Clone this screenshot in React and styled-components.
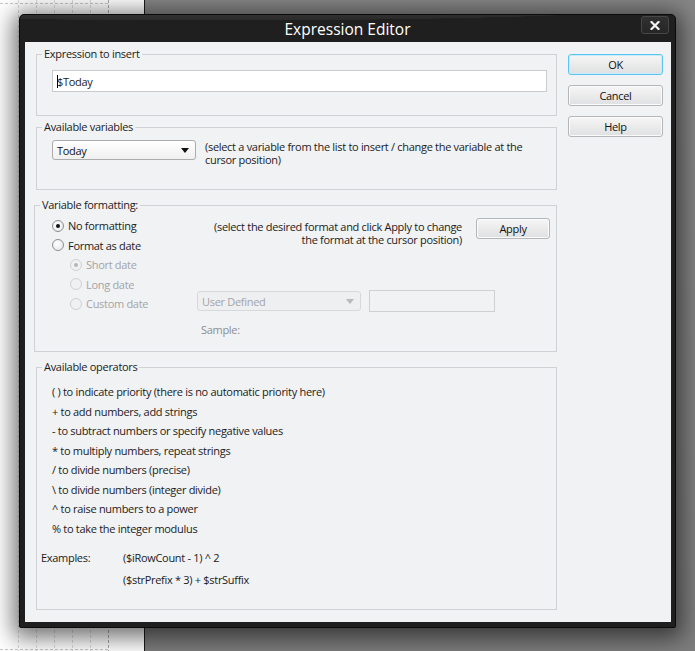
import React from 'react';
import styled, { createGlobalStyle } from 'styled-components';

const GlobalStyle = createGlobalStyle`
  html, body {
    margin: 0;
    padding: 0;
    background: #808080;
    overflow: hidden;
  }
  * { box-sizing: border-box; }
`;

const UI_FONT = `"Open Sans", "Noto Sans", sans-serif`;

const Desktop = styled.div`
  position: relative;
  width: 695px;
  height: 651px;
  display: flex;
  font-family: ${UI_FONT};
  font-size: 11px;
  letter-spacing: -0.3px;
  color: #1b1b1b;
`;

const PageSheet = styled.div`
  width: 145px;
  background: #ffffff;
  border-right: 1px solid #1a1a1a;
  position: relative;
`;

const GrayArea = styled.div`
  flex: 1;
  background: linear-gradient(#868686, #7d7d7d);
`;

const Window = styled.div`
  position: absolute;
  left: 19px;
  top: 14px;
  width: 657px;
  height: 614px;
  background: #1f1f1f;
  border: 1px solid #0a0a0a;
  border-radius: 5px 5px 2px 2px;
  box-shadow: 0 4px 22px 6px rgba(0, 0, 0, 0.55);
  display: flex;
  flex-direction: column;
`;

const TitleBar = styled.div`
  height: 27px;
  position: relative;
  display: flex;
  align-items: center;
  justify-content: center;
  color: #ffffff;
  font-size: 15.5px;
  letter-spacing: 0;
  background: radial-gradient(ellipse 120% 90% at 30% -30%, #3e3e3e 0%, #2a2a2a 55%, #1f1f1f 56%);
  border-radius: 5px 5px 0 0;
`;

const CloseButton = styled.div`
  position: absolute;
  right: 6px;
  top: 1px;
  width: 28px;
  height: 18px;
  border: 1px solid #474747;
  border-radius: 3px;
  background: linear-gradient(#303030, #262626);
  display: flex;
  align-items: center;
  justify-content: center;
`;

const Body = styled.div`
  flex: 1;
  margin: 0 4px 5px 5px;
  background: #f1f2f4;
  display: flex;
  gap: 11px;
  padding: 5px 0 0 11px;
`;

const MainColumn = styled.div`
  width: 521px;
  display: flex;
  flex-direction: column;
`;

const Group = styled.fieldset`
  margin: ${p => p.$top || 0}px 0 0 ${p => p.$shift || 0}px;
  padding: 0;
  border: 1px solid #cfd1d4;
  height: ${p => p.$h}px;
  position: relative;
  min-width: 0;
`;

const Legend = styled.legend`
  margin-left: 5px;
  padding: 0 2px;
  line-height: 14px;
  color: #1b1b1b;
`;

const TextBox = styled.div`
  margin: 9px 9px 0 15px;
  height: 22px;
  background: #ffffff;
  border: 1px solid #c9cacc;
  display: flex;
  align-items: center;
  padding-left: 4px;
`;

const Caret = styled.span`
  display: inline-block;
  width: 1px;
  height: 13px;
  background: #000;
  margin-right: -1px;
`;

const VarRow = styled.div`
  display: flex;
  align-items: flex-start;
  gap: 9px;
  margin: 6px 0 0 15px;
`;

const Combo = styled.div`
  width: ${p => p.$w}px;
  height: 20px;
  border: 1px solid ${p => (p.$disabled ? '#d7d8da' : '#acacac')};
  border-radius: 3px;
  background: ${p => (p.$disabled ? '#eeeff1' : 'linear-gradient(#ffffff, #f0f0f0)')};
  color: ${p => (p.$disabled ? '#a3a4a6' : '#111')};
  display: flex;
  align-items: center;
  justify-content: space-between;
  padding: 0 6px 0 4px;
  flex-shrink: 0;
`;

const HintText = styled.div`
  line-height: 13px;
  width: ${p => p.$w}px;
  text-align: ${p => p.$align || 'left'};
  margin-top: ${p => p.$mt || 0}px;
`;

const FormatGrid = styled.div`
  display: grid;
  grid-template-columns: 145px 1fr;
  margin: 4px 0 0 17px;
`;

const RadioList = styled.div`
  display: flex;
  flex-direction: column;
  padding-left: ${p => p.$indent || 0}px;
`;

const RadioRow = styled.div`
  display: flex;
  align-items: center;
  gap: 4px;
  height: 19.5px;
  color: ${p => (p.$disabled ? '#a3a4a6' : '#1b1b1b')};
  white-space: nowrap;
`;

const RadioDot = styled.span`
  width: 12px;
  height: 12px;
  border-radius: 50%;
  border: 1px solid ${p => (p.$disabled ? '#cfd0d2' : '#8c8e92')};
  background: ${p => (p.$disabled ? '#f0f1f3' : 'radial-gradient(circle at 40% 35%, #ffffff, #e4e5e8)')};
  display: flex;
  align-items: center;
  justify-content: center;
  flex-shrink: 0;

  &::after {
    content: '';
    width: 4px;
    height: 4px;
    border-radius: 50%;
    background: ${p => (p.$disabled ? '#b5b6b8' : '#111')};
    display: ${p => (p.$checked ? 'block' : 'none')};
  }
`;

const FormatRight = styled.div`
  display: flex;
  flex-direction: column;
`;

const HintBlock = styled.div`
  display: flex;
  gap: 14px;
  align-items: flex-start;
  height: 45px;
`;

const DateFields = styled.div`
  display: flex;
  gap: 8px;
  align-items: center;
  margin-top: 29px;
`;

const PlainBox = styled.div`
  width: 126px;
  height: 22px;
  border: 1px solid #cfd0d2;
  background: #f1f2f4;
`;

const SampleLabel = styled.div`
  color: #8d8e90;
  margin: 10px 0 0 4px;
`;

const WinButton = styled.div`
  width: ${p => p.$w || 95}px;
  height: 21px;
  margin-top: ${p => p.$mt || 0}px;
  border: 1px solid ${p => (p.$focus ? '#5cc4f2' : '#b4b6b9')};
  border-radius: 3px;
  background: linear-gradient(#f6f6f6 0%, #ebebeb 50%, #dfe0e2 100%);
  display: flex;
  align-items: center;
  justify-content: center;
  color: #111;
  flex-shrink: 0;
  box-shadow: ${p => (p.$focus ? 'inset 0 0 0 1px #c8ecfc' : 'inset 0 0 0 1px #fbfbfb')};
`;

const ButtonColumn = styled.div`
  display: flex;
  flex-direction: column;
  gap: 10px;
  padding-top: 7px;
`;

const OperatorList = styled.div`
  display: flex;
  flex-direction: column;
  margin: 8px 0 0 15px;
`;

const OperatorLine = styled.div`
  height: 19.5px;
  line-height: 19.5px;
`;

const ExamplesGrid = styled.div`
  display: grid;
  grid-template-columns: 82px 1fr;
  margin: 9px 0 0 4px;

  & > div {
    height: 22px;
    line-height: 22px;
  }
`;

const Arrow = ({ color = '#111' }) => (
  <svg width="8" height="5" viewBox="0 0 8 5">
    <path d="M0 0 H8 L4 5 Z" fill={color} />
  </svg>
);

const SheetGrid = () => (
  <svg width="145" height="651" style={{ position: 'absolute', left: 0, top: 0 }}>
    {[18, 36, 54, 72, 90].map(x => (
      <line key={x} x1={x + 0.5} y1="0" x2={x + 0.5} y2="651" stroke="#dcdcdc" strokeDasharray="3 2" />
    ))}
    <line x1="108.5" y1="0" x2="108.5" y2="651" stroke="#a9a9a9" strokeDasharray="3 2" />
    <line x1="0" y1="3.5" x2="109" y2="3.5" stroke="#c8c8c8" strokeDasharray="3 2" />
    <line x1="0" y1="649.5" x2="109" y2="649.5" stroke="#c8c8c8" strokeDasharray="3 2" />
  </svg>
);

const operators = [
  '( ) to indicate priority (there is no automatic priority here)',
  '+ to add numbers, add strings',
  '- to subtract numbers or specify negative values',
  '* to multiply numbers, repeat strings',
  '/ to divide numbers (precise)',
  '\\ to divide numbers (integer divide)',
  '^ to raise numbers to a power',
  '% to take the integer modulus',
];

export default function App() {
  return (
    <>
      <GlobalStyle />
      <Desktop>
        <PageSheet>
          <SheetGrid />
        </PageSheet>
        <GrayArea />

        <Window>
          <TitleBar>
            Expression Editor
            <CloseButton>
              <svg width="10" height="9" viewBox="0 0 10 9">
                <path d="M1.5 1 L8.5 8 M8.5 1 L1.5 8" stroke="#f2f2f2" strokeWidth="2.2" strokeLinecap="square" />
              </svg>
            </CloseButton>
          </TitleBar>

          <Body>
            <MainColumn>
              <Group $h={69}>
                <Legend>Expression to insert</Legend>
                <TextBox>
                  <Caret />$Today
                </TextBox>
              </Group>

              <Group $top={4} $h={70}>
                <Legend>Available variables</Legend>
                <VarRow>
                  <Combo $w={144}>
                    Today
                    <Arrow />
                  </Combo>
                  <HintText $w={330} $mt={0}>
                    (select a variable from the list to insert / change the variable at the cursor position)
                  </HintText>
                </VarRow>
              </Group>

              <Group $top={8} $shift={-2} $h={154}>
                <Legend>Variable formatting:</Legend>
                <FormatGrid>
                  <RadioList>
                    <RadioRow>
                      <RadioDot $checked />No formatting
                    </RadioRow>
                    <RadioRow>
                      <RadioDot />Format as date
                    </RadioRow>
                    <RadioList $indent={18}>
                      <RadioRow $disabled>
                        <RadioDot $disabled $checked />Short date
                      </RadioRow>
                      <RadioRow $disabled>
                        <RadioDot $disabled />Long date
                      </RadioRow>
                      <RadioRow $disabled>
                        <RadioDot $disabled />Custom date
                      </RadioRow>
                    </RadioList>
                  </RadioList>
                  <FormatRight>
                    <HintBlock>
                      <HintText $w={265} $align="right" $mt={4}>
                        (select the desired format and click Apply to change the format at the cursor position)
                      </HintText>
                      <WinButton $w={74} $mt={2}>Apply</WinButton>
                    </HintBlock>
                    <DateFields>
                      <Combo $w={164} $disabled>
                        User Defined
                        <Arrow color="#b8b9bb" />
                      </Combo>
                      <PlainBox />
                    </DateFields>
                    <SampleLabel>Sample:</SampleLabel>
                  </FormatRight>
                </FormatGrid>
              </Group>

              <Group $top={8} $h={250}>
                <Legend>Available operators</Legend>
                <OperatorList>
                  {operators.map(op => (
                    <OperatorLine key={op}>{op}</OperatorLine>
                  ))}
                </OperatorList>
                <ExamplesGrid>
                  <div>Examples:</div>
                  <div>($iRowCount - 1) ^ 2</div>
                  <div />
                  <div>($strPrefix * 3) + $strSuffix</div>
                </ExamplesGrid>
              </Group>
            </MainColumn>

            <ButtonColumn>
              <WinButton $focus>OK</WinButton>
              <WinButton>Cancel</WinButton>
              <WinButton>Help</WinButton>
            </ButtonColumn>
          </Body>
        </Window>
      </Desktop>
    </>
  );
}
